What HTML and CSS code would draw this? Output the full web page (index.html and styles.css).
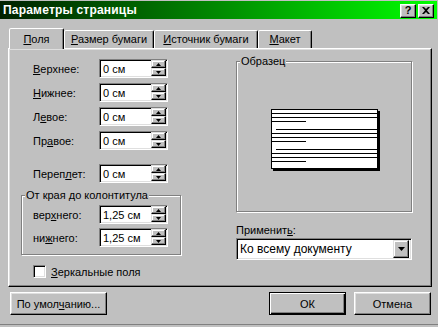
FILE: index.html
```html
<!DOCTYPE html>
<html lang="ru">
<head>
<meta charset="utf-8">
<title>Параметры страницы</title>
<link rel="stylesheet" href="styles.css">
</head>
<body>
<div class="window">
  <div class="titlebar">
    <span class="title">Параметры страницы</span>
    <div class="caption-btns">
      <span class="cap-btn help">?</span>
      <span class="cap-btn close"><svg width="8" height="7" viewBox="0 0 8 7"><path d="M0 0h2l2 2 2-2h2L5 3.5 8 7H6L4 5 2 7H0l3-3.5z" fill="#000"/></svg></span>
    </div>
  </div>
  <div class="body">
    <div class="tabs">
      <div class="tab active"><u>П</u>оля</div>
      <div class="tab t-size"><u>Р</u>азмер бумаги</div>
      <div class="tab t-source"><u>И</u>сточник бумаги</div>
      <div class="tab t-layout"><u>М</u>акет</div>
    </div>
    <div class="panel">
      <div class="col-left">
        <div class="fields">
          <div class="row"><span class="lbl"><u>В</u>ерхнее:</span><div class="spin"><span class="val">0 см</span><span class="spin-btns"><span class="sb up"><svg width="5" height="3" viewBox="0 0 5 3"><path d="M2.5 0L5 3H0z"/></svg></span><span class="sb down"><svg width="5" height="3" viewBox="0 0 5 3"><path d="M0 0h5L2.5 3z"/></svg></span></span></div></div>
          <div class="row"><span class="lbl"><u>Н</u>ижнее:</span><div class="spin"><span class="val">0 см</span><span class="spin-btns"><span class="sb up"><svg width="5" height="3" viewBox="0 0 5 3"><path d="M2.5 0L5 3H0z"/></svg></span><span class="sb down"><svg width="5" height="3" viewBox="0 0 5 3"><path d="M0 0h5L2.5 3z"/></svg></span></span></div></div>
          <div class="row"><span class="lbl">Л<u>е</u>вое:</span><div class="spin"><span class="val">0 см</span><span class="spin-btns"><span class="sb up"><svg width="5" height="3" viewBox="0 0 5 3"><path d="M2.5 0L5 3H0z"/></svg></span><span class="sb down"><svg width="5" height="3" viewBox="0 0 5 3"><path d="M0 0h5L2.5 3z"/></svg></span></span></div></div>
          <div class="row"><span class="lbl">Пр<u>а</u>вое:</span><div class="spin"><span class="val">0 см</span><span class="spin-btns"><span class="sb up"><svg width="5" height="3" viewBox="0 0 5 3"><path d="M2.5 0L5 3H0z"/></svg></span><span class="sb down"><svg width="5" height="3" viewBox="0 0 5 3"><path d="M0 0h5L2.5 3z"/></svg></span></span></div></div>
        </div>
        <div class="row gutter"><span class="lbl">Переп<u>л</u>ет:</span><div class="spin"><span class="val">0 см</span><span class="spin-btns"><span class="sb up"><svg width="5" height="3" viewBox="0 0 5 3"><path d="M2.5 0L5 3H0z"/></svg></span><span class="sb down"><svg width="5" height="3" viewBox="0 0 5 3"><path d="M0 0h5L2.5 3z"/></svg></span></span></div></div>
        <fieldset class="group hf">
          <legend>От края до колонтитула</legend>
          <div class="row"><span class="lbl inner">вер<u>х</u>него:</span><div class="spin"><span class="val">1,25 см</span><span class="spin-btns"><span class="sb up"><svg width="5" height="3" viewBox="0 0 5 3"><path d="M2.5 0L5 3H0z"/></svg></span><span class="sb down"><svg width="5" height="3" viewBox="0 0 5 3"><path d="M0 0h5L2.5 3z"/></svg></span></span></div></div>
          <div class="row"><span class="lbl inner">ни<u>ж</u>него:</span><div class="spin"><span class="val">1,25 см</span><span class="spin-btns"><span class="sb up"><svg width="5" height="3" viewBox="0 0 5 3"><path d="M2.5 0L5 3H0z"/></svg></span><span class="sb down"><svg width="5" height="3" viewBox="0 0 5 3"><path d="M0 0h5L2.5 3z"/></svg></span></span></div></div>
        </fieldset>
        <div class="check-row"><span class="checkbox"></span><span><u>З</u>еркальные поля</span></div>
      </div>
      <div class="col-right">
        <fieldset class="group sample">
          <legend>Образец</legend>
          <svg class="page" width="109" height="62" viewBox="0 0 109 62">
            <rect x="2" y="2" width="107" height="60" fill="#000"/>
            <rect x="0.5" y="0.5" width="106" height="59" fill="#fff" stroke="#000"/>
            <g stroke="#000" stroke-width="1">
              <path d="M1 4.5H106M1 8.5H106M1 12.5H35M5 20.5H106M1 24.5H106M1 28.5H106M1 32.5H35M5 40.5H106M1 44.5H106M1 48.5H106M1 52.5H35"/>
            </g>
          </svg>
        </fieldset>
        <div class="apply-label">Применит<u>ь</u>:</div>
        <div class="select"><span class="sel-val">Ко всему документу</span><span class="drop"><svg width="7" height="4" viewBox="0 0 7 4"><path d="M0 0h7L3.5 4z"/></svg></span></div>
      </div>
    </div>
    <div class="footer">
      <button class="btn defaults">По умол<u>ч</u>анию...</button>
      <span class="spacer"></span>
      <button class="btn ok">ОК</button>
      <button class="btn">Отмена</button>
    </div>
  </div>
</div>
</body>
</html>
```

FILE: styles.css
```css
* { box-sizing: border-box; }
html, body { margin: 0; padding: 0; }
body {
  font-family: "Liberation Sans", Arial, sans-serif;
  font-size: 11px;
  color: #000;
  background: #c0c0c0;
}
u { text-decoration: underline; text-underline-offset: 1px; }

.window {
  width: 438px;
  height: 327px;
  background: #c0c0c0;
  padding-top: 1px;
  display: flex;
  flex-direction: column;
  overflow: hidden;
}

.titlebar {
  height: 18px;
  margin-right: 1px;
  background: linear-gradient(to right, #002000, #008a00 50%, #00ff00);
  display: flex;
  align-items: center;
  justify-content: space-between;
  padding: 0 3px 0 3px;
}
.title {
  color: #fff;
  font-weight: bold;
  font-size: 12px;
  letter-spacing: 0.2px;
}
.caption-btns { display: flex; gap: 2px; padding-top: 1px; margin-right: 0; }
.cap-btn {
  width: 16px;
  height: 14px;
  background: #c0c0c0;
  border: 1px solid;
  border-color: #fff #000 #000 #fff;
  box-shadow: inset -1px -1px #808080, inset 1px 1px #dfdfdf;
  display: flex;
  align-items: center;
  justify-content: center;
}
.help { font-weight: bold; font-size: 11px; line-height: 1; }

.body {
  flex: 1;
  display: flex;
  flex-direction: column;
  padding: 9px 6px 0 8px;
  border-bottom: 1px solid #808080;
  margin-bottom: 2px;
}

.tabs {
  display: flex;
  align-items: flex-end;
  height: 20px;
  padding-left: 1px;
  position: relative;
  z-index: 1;
}
.tab {
  height: 18px;
  border: 1px solid;
  border-bottom: none;
  border-color: #fff #000 transparent #fff;
  box-shadow: inset -1px 0 #808080;
  border-radius: 2px 2px 0 0;
  text-align: center;
  padding-top: 2px;
  background: #c0c0c0;
}
.tab.active {
  width: 55px;
  height: 21px;
  margin-bottom: -1px;
  padding-top: 4px;
}
.t-size { width: 90px; }
.t-source { width: 104px; }
.t-layout { width: 54px; }

.panel {
  width: 424px;
  height: 239px;
  border: 1px solid;
  border-color: #fff #000 #000 #fff;
  box-shadow: inset -1px -1px #808080, inset 1px 1px #dfdfdf;
  display: flex;
  align-items: flex-start;
  padding: 10px 0 0 12px;
}

.col-left { width: 160px; display: flex; flex-direction: column; }
.col-right { width: 176px; margin-left: 55px; margin-top: -4px; display: flex; flex-direction: column; }

.fields { display: flex; flex-direction: column; gap: 5px; }
.row { display: flex; align-items: center; height: 19px; }
.lbl { padding-left: 12px; width: 78px; }
.lbl.inner { width: 77px; padding-left: 11px; }
.gutter { margin-top: 14px; }

.spin {
  width: 69px;
  height: 19px;
  background: #fff;
  border: 1px solid;
  border-color: #808080 #fff #fff #808080;
  box-shadow: inset 1px 1px #000, inset -1px -1px #dfdfdf;
  display: flex;
  align-items: center;
  padding: 1px 1px 1px 3px;
}
.val { flex: 1; padding-top: 1px; }
.spin-btns {
  width: 15px;
  height: 16px;
  display: flex;
  flex-direction: column;
  align-self: stretch;
  margin-top: -1px;
  margin-bottom: -1px;
}
.sb {
  flex: 1;
  background: #c0c0c0;
  border: 1px solid;
  border-color: #dfdfdf #000 #000 #dfdfdf;
  box-shadow: inset -1px -1px #808080, inset 1px 1px #fff;
  display: flex;
  align-items: center;
  justify-content: center;
}
.sb svg { fill: #000; display: block; }

.group {
  margin: 0;
  padding: 0;
  border: 1px solid #808080;
  box-shadow: 1px 1px 0 #fff, inset 1px 1px 0 #fff;
}
.group legend {
  padding: 0 1px;
  margin-left: 3px;
  line-height: 13px;
  background: #c0c0c0;
}
.hf {
  width: 160px;
  margin-top: 6px;
  padding: 3px 0 7px 0;
  display: flex;
  flex-direction: column;
  gap: 4px;
}

.check-row {
  display: flex;
  align-items: center;
  margin-top: 10px;
  padding-left: 12px;
  gap: 5px;
}
.checkbox {
  width: 13px;
  height: 13px;
  background: #fff;
  border: 1px solid;
  border-color: #808080 #fff #fff #808080;
  box-shadow: inset 1px 1px #000, inset -1px -1px #dfdfdf;
}

.sample {
  width: 176px;
  height: 157px;
  display: block;
}
.page { display: block; margin: 41px 0 0 34px; }

.apply-label { margin-top: 12px; line-height: 13px; }
.select {
  margin-top: 1px;
  width: 176px;
  height: 22px;
  background: #fff;
  border: 1px solid;
  border-color: #808080 #fff #fff #808080;
  box-shadow: inset 1px 1px #000, inset -1px -1px #dfdfdf;
  display: flex;
  align-items: center;
  padding: 2px;
  font-size: 12px;
}
.sel-val { flex: 1; padding-left: 1px; }
.drop {
  width: 16px;
  height: 18px;
  background: #c0c0c0;
  border: 1px solid;
  border-color: #dfdfdf #000 #000 #dfdfdf;
  box-shadow: inset -1px -1px #808080, inset 1px 1px #fff;
  display: flex;
  align-items: center;
  justify-content: center;
}
.drop svg { fill: #000; display: block; }

.footer {
  display: flex;
  align-items: center;
  margin-top: 5px;
  padding: 0 1px 0 2px;
  gap: 8px;
}
.spacer { flex: 1; }
.btn {
  font-family: inherit;
  font-size: 11px;
  color: #000;
  height: 23px;
  width: 77px;
  background: #c0c0c0;
  border: 1px solid;
  border-color: #fff #000 #000 #fff;
  box-shadow: inset -1px -1px #808080, inset 1px 1px #dfdfdf;
  padding: 0;
  margin: 0;
}
.btn.defaults { width: 97px; }
.btn.ok {
  border-color: #000;
  box-shadow: inset 1px 1px #fff, inset -1px -1px #000, inset -2px -2px #808080;
}
```
